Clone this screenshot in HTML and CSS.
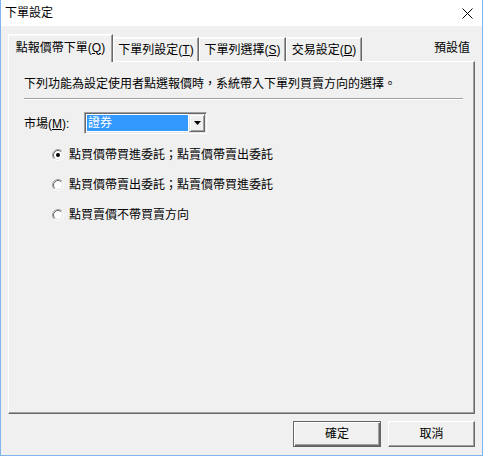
FILE: index.html
```html
<!doctype html>
<html lang="zh-Hant">

<head>
    <meta charset="utf-8" />
    <link rel="icon" href="data:,">
    <meta name="viewport" content="width=device-width, initial-scale=1">
    <link rel="stylesheet" href="styles.css">
</head>

<body>
    <div class="window">
        <div class="titlebar">
            <span class="title">下單設定</span>
            <svg class="close" width="11" height="11" viewBox="0 0 11 11">
                <path d="M0.5 0.5 L10.5 10.5 M10.5 0.5 L0.5 10.5" stroke="#000" stroke-width="1" fill="none" />
            </svg>
        </div>
        <div class="client">
            <div class="tabstrip">
                <div class="tab active" style="width: 105px">點報價帶下單(<u>Q</u>)</div>
                <div class="tab" style="width: 86px">下單列設定(<u>T</u>)</div>
                <div class="tab" style="width: 87px">下單列選擇(<u>S</u>)</div>
                <div class="tab" style="width: 76px">交易設定(<u>D</u>)</div>
                <div class="defaults">預設值</div>
            </div>
            <div class="panel">
                <p class="intro">下列功能為設定使用者點選報價時，系統帶入下單列買賣方向的選擇。</p>
                <div class="sep"></div>
                <div class="market">
                    <span class="market-label">市場(<u>M</u>):</span>
                    <div class="combo">
                        <span class="combo-value">證券</span>
                        <span class="combo-btn">
                            <svg width="7" height="4" viewBox="0 0 7 4">
                                <polygon points="0,0 7,0 3.5,4" fill="#000" />
                            </svg>
                        </span>
                    </div>
                </div>
                <div class="options">
                    <div class="option">
                        <svg class="radio" width="12" height="12" viewBox="0 0 12 12">
                            <circle cx="6" cy="6" r="4.5" fill="#fff" />
                            <path d="M2.11 9.89 A5.5 5.5 0 0 1 9.89 2.11" stroke="#a0a0a0" fill="none" />
                            <path d="M9.89 2.11 A5.5 5.5 0 0 1 2.11 9.89" stroke="#fff" fill="none" />
                            <path d="M2.82 9.18 A4.5 4.5 0 0 1 9.18 2.82" stroke="#696969" fill="none" />
                            <path d="M9.18 2.82 A4.5 4.5 0 0 1 2.82 9.18" stroke="#e3e3e3" fill="none" />
                            <circle cx="6" cy="6" r="2" fill="#000" />
                        </svg>
                        <span>點買價帶買進委託；點賣價帶賣出委託</span>
                    </div>
                    <div class="option">
                        <svg class="radio" width="12" height="12" viewBox="0 0 12 12">
                            <circle cx="6" cy="6" r="4.5" fill="#fff" />
                            <path d="M2.11 9.89 A5.5 5.5 0 0 1 9.89 2.11" stroke="#a0a0a0" fill="none" />
                            <path d="M9.89 2.11 A5.5 5.5 0 0 1 2.11 9.89" stroke="#fff" fill="none" />
                            <path d="M2.82 9.18 A4.5 4.5 0 0 1 9.18 2.82" stroke="#696969" fill="none" />
                            <path d="M9.18 2.82 A4.5 4.5 0 0 1 2.82 9.18" stroke="#e3e3e3" fill="none" />
                        </svg>
                        <span>點買價帶賣出委託；點賣價帶買進委託</span>
                    </div>
                    <div class="option">
                        <svg class="radio" width="12" height="12" viewBox="0 0 12 12">
                            <circle cx="6" cy="6" r="4.5" fill="#fff" />
                            <path d="M2.11 9.89 A5.5 5.5 0 0 1 9.89 2.11" stroke="#a0a0a0" fill="none" />
                            <path d="M9.89 2.11 A5.5 5.5 0 0 1 2.11 9.89" stroke="#fff" fill="none" />
                            <path d="M2.82 9.18 A4.5 4.5 0 0 1 9.18 2.82" stroke="#696969" fill="none" />
                            <path d="M9.18 2.82 A4.5 4.5 0 0 1 2.82 9.18" stroke="#e3e3e3" fill="none" />
                        </svg>
                        <span>點買賣價不帶買賣方向</span>
                    </div>
                </div>
            </div>
            <div class="buttons">
                <button class="btn default">確定</button>
                <button class="btn">取消</button>
            </div>
        </div>
    </div>
</body>

</html>
```

FILE: styles.css
```css
html {
    font-family: "Liberation Sans", "Noto Sans CJK TC", sans-serif;
    font-size: 12px;
    line-height: 16px;
    color: #000;
}

body {
    margin: 0;
}

u {
    text-decoration: underline;
    text-underline-offset: 1px;
}

.window {
    width: 483px;
    height: 456px;
    box-sizing: border-box;
    display: flex;
    flex-direction: column;
    background: #f0f0f0;
    border: 1px solid #7fb5ea;
    border-top: none;
}

.titlebar {
    height: 26px;
    flex: none;
    display: flex;
    align-items: center;
    padding-left: 4px;
    background: #fff;
}

.close {
    margin-left: auto;
    margin-right: 9px;
}

.client {
    flex: 1;
    display: flex;
    flex-direction: column;
    padding: 8px 7px 8px 7px;
}

.tabstrip {
    height: 27px;
    flex: none;
    display: flex;
    align-items: flex-end;
}

.tab {
    height: 24px;
    box-sizing: border-box;
    display: flex;
    align-items: center;
    justify-content: center;
    padding-top: 1px;
    border: 1px solid;
    border-color: #fff #696969 transparent #fff;
    border-bottom: none;
    box-shadow: inset -1px 0 #a0a0a0, inset 0 1px #fafafa;
    white-space: nowrap;
}

.tab.active {
    height: 28px;
    margin-bottom: -1px;
    padding-top: 0;
    padding-bottom: 2px;
    background: #f0f0f0;
    position: relative;
    z-index: 1;
}

.defaults {
    margin-left: auto;
    margin-right: 5px;
    align-self: center;
}

.panel {
    flex: 1;
    box-sizing: border-box;
    padding: 14px 11px 0 15px;
    border: 1px solid;
    border-color: #fff #696969 #696969 #fff;
    box-shadow: inset -1px -1px #a0a0a0;
}

.intro {
    margin: 0;
    white-space: nowrap;
}

.sep {
    margin-top: 6px;
    border-top: 1px solid #a0a0a0;
    border-bottom: 1px solid #fff;
}

.market {
    display: flex;
    align-items: center;
    margin-top: 12px;
}

.market-label {
    width: 60px;
    padding-top: 2px;
}

.combo {
    width: 123px;
    height: 22px;
    box-sizing: border-box;
    display: flex;
    border: 1px solid;
    border-color: #a0a0a0 #fff #fff #a0a0a0;
    box-shadow: inset 1px 1px #696969, inset -1px -1px #e3e3e3;
    padding: 1px;
    background: #fff;
}

.combo-value {
    flex: 1;
    margin: 1px;
    padding-left: 1px;
    background: #3399ff;
    color: #fff;
    line-height: 16px;
}

.combo-btn {
    width: 16px;
    box-sizing: border-box;
    display: flex;
    align-items: center;
    justify-content: center;
    background: #f0f0f0;
    border: 1px solid;
    border-color: #e3e3e3 #696969 #696969 #e3e3e3;
    box-shadow: inset 1px 1px #fff, inset -1px -1px #a0a0a0;
}

.options {
    margin-top: 6px;
    padding-left: 28px;
}

.option {
    height: 30px;
    display: flex;
    align-items: center;
    gap: 5px;
}

.buttons {
    flex: none;
    display: flex;
    justify-content: flex-end;
    gap: 7px;
    margin-top: 7px;
}

.btn {
    width: 87px;
    height: 26px;
    box-sizing: border-box;
    font: inherit;
    color: #000;
    background: #f0f0f0;
    border: 1px solid;
    border-color: #fff #696969 #696969 #fff;
    box-shadow: inset -1px -1px #a0a0a0;
    padding: 0;
}

.btn.default {
    width: 88px;
    border-color: #646464;
    box-shadow: inset 1px 1px #fff, inset -1px -1px #696969, inset -2px -2px #a0a0a0;
}
```
